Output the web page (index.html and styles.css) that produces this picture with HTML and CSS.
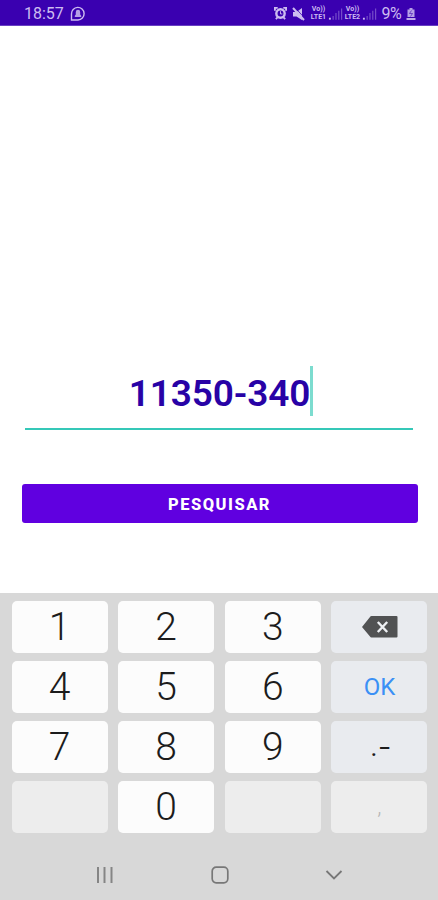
FILE: index.html
```html
<!DOCTYPE html>
<html lang="pt-BR">
<head>
<meta charset="utf-8">
<meta name="viewport" content="width=device-width, initial-scale=1">
<title>Pesquisar CEP</title>
<link rel="stylesheet" href="styles.css">
</head>
<body>
<div class="phone">
  <header class="status">
    <span class="clock">18:57</span>
    <svg class="chat" width="16" height="16" viewBox="0 0 16 16"><path d="M1.500 14V8A6.300 6.300 0 1 1 8 14z" fill="none" stroke="currentColor" stroke-width="1.400"/><path d="M4.800 11V9.800L5.800 8.500V6a2.200 2.200 0 0 1 4.400 0V8.500L11.200 9.800V11z" fill="currentColor" opacity=".85"/></svg>
    <div class="tray">
      <svg width="13" height="13" viewBox="0 0 14 14"><path d="M1 4V1h3M10 1h3v3M2 13l2-2M12 13l-2-2" fill="none" stroke="currentColor" stroke-width="2"/><circle cx="7" cy="7" r="4.500" fill="none" stroke="currentColor" stroke-width="2.600"/><path d="M7 4.500V7.500H9" fill="none" stroke="currentColor"/></svg>
      <svg class="mute" width="13" height="14" viewBox="0 0 13 14"><path d="M1 5h3.500L10 1v12L4.500 9.500H1z" fill="currentColor"/><path d="M2.500 0l11 12" stroke="#3a00b0" stroke-width=".8"/><path d="M1 1l11 12" stroke="currentColor" stroke-width="2"/></svg>
      <span class="lte"><span>Vo))</span><span>LTE1</span></span>
      <svg class="signal" width="15" height="14" viewBox="0 0 16 14"><path d="M1 11h2v2H1z" fill="currentColor"/><path d="M5.500 9v4M8.500 6v7M11.500 3.500V13M14.500 1V13" stroke="currentColor" stroke-width="1.300" opacity=".4"/></svg>
      <span class="lte"><span>Vo))</span><span>LTE2</span></span>
      <svg class="signal" width="15" height="14" viewBox="0 0 16 14"><path d="M1 11h2v2H1z" fill="currentColor"/><path d="M5.500 9v4M8.500 6v7M11.500 3.500V13M14.500 1V13" stroke="currentColor" stroke-width="1.300" opacity=".4"/></svg>
      <span class="battery">9%</span>
      <svg class="cell" width="10" height="14" viewBox="0 0 9 14"><path d="M3 1h3v1.500h2V10H1V2.500h2z" fill="currentColor" opacity=".85"/><path d="M5 3.500L3 6.500h3l-2 3" fill="none" stroke="#3a00b0" stroke-width=".6"/><path d="M0 12h9" stroke="currentColor" stroke-width="1.800"/></svg>
    </div>
  </header>
  <main class="content">
    <div class="field"><span class="value">11350-340</span><i class="caret"></i></div>
    <button class="search">PESQUISAR</button>
  </main>
  <section class="keyboard">
    <div class="keys">
      <div class="key">1</div><div class="key">2</div><div class="key">3</div>
      <div class="key action"><svg class="erase" width="36" height="22" viewBox="0 0 36 22"><path d="M9.500 0H34.500Q35.500 0 35.500 1V20.500Q35.500 21.500 34.500 21.500H9.500Q8.500 21.500 8 20.500L0 11 8 1Q8.500 0 9.500 0z" fill="#515253"/><path d="M15.800 6l9.400 10M25.200 6l-9.400 10" stroke="#eef0f3" stroke-width="2.400"/></svg></div>
      <div class="key">4</div><div class="key">5</div><div class="key">6</div><div class="key action ok">OK</div>
      <div class="key">7</div><div class="key">8</div><div class="key">9</div>
      <div class="key action symbols"><span class="dot">.</span><span class="dash">-</span></div>
      <div class="key off"></div><div class="key">0</div><div class="key off"></div><div class="key off comma">,</div>
    </div>
    <nav class="nav">
      <svg width="18" height="18" viewBox="0 0 18 18"><path d="M2 1v16M8.500 1v16M15.500 1v16" stroke="#858585" stroke-width="2"/></svg>
      <svg width="18" height="18" viewBox="0 0 18 18"><rect x="1.200" y="1.200" width="15.600" height="15.600" rx="4" fill="none" stroke="#777" stroke-width="1.700"/></svg>
      <svg width="18" height="18" viewBox="0 0 18 18"><path d="M1.500 5L9 12.500 16.500 5" fill="none" stroke="#777" stroke-width="1.800"/></svg>
    </nav>
  </section>
</div>
</body>
</html>
```
FILE: styles.css
```css
* { box-sizing: border-box; }
body { margin: 0; background: #fff; font-family: Roboto, sans-serif; }
.phone { width: 438px; height: 900px; display: flex; flex-direction: column; overflow: hidden; }
.status {
  height: 26px;
  flex: none;
  display: flex;
  align-items: center;
  padding: 2px 22px 0 24px;
  background: #3a00b0;
  border-bottom: 1px solid #6840c2;
  color: #cdbcf0;
}
.clock { font-size: 16px; line-height: 20px; }
.chat { margin-left: 6px; }
.tray { margin-left: auto; display: flex; align-items: center; }
.mute { margin: 0 4px 0 5px; }
.lte {
  display: flex;
  flex-direction: column;
  gap: 1px;
  width: 18px;
  font-size: 7px;
  line-height: 7px;
  font-weight: 700;
  text-align: center;
}
.signal { margin-left: 1px; }
.battery { margin-left: 4px; font-size: 16px; line-height: 20px; letter-spacing: -0.6px; }
.cell { margin-left: 5px; }
.content { flex: 1; padding: 338px 21px 0; }
.field {
  height: 66px;
  margin: 0 4px;
  display: flex;
  justify-content: center;
  border-bottom: 2px solid #35c8b8;
}
.value {
  font-size: 37px;
  line-height: 59px;
  font-weight: 600;
  letter-spacing: -0.15px;
  color: #2802a6;
  margin-left: 4px;
}
.caret { width: 3px; height: 50px; margin-top: 2px; background: #7cdccf; }
.search {
  display: block;
  width: 396px;
  height: 39px;
  margin: 54px 0 0 0.5px;
  padding: 2px 0 0;
  border: 0;
  border-radius: 3px;
  background: #6000e0;
  color: #fff;
  font: 800 16.5px/37px Roboto, sans-serif;
  letter-spacing: 1.5px;
}
.keyboard { height: 307px; flex: none; padding: 7.5px 10.500px 0 11.500px; background: #d8d8d8; }
.keys {
  display: grid;
  grid-template-columns: repeat(4, 96px);
  grid-auto-rows: 52px;
  gap: 8px 10.670px;
}
.key {
  display: flex;
  align-items: center;
  justify-content: center;
  border-radius: 5px;
  background: #fcfcfc;
  color: #1c1c1c;
  font-size: 39px;
  font-weight: 300;
  line-height: 52px;
}
.action { background: #e9ebef; }
.erase { margin-left: 1px; }
.ok { color: #3b90f5; font-size: 24px; font-weight: 400; }
.symbols { font-size: 26px; font-weight: 400; }
.dot { margin-right: 2px; }
.dash { transform: scaleX(1.5); margin-left: 2px; }
.off { background: #ededed; }
.comma { color: #b5b5b5; font-size: 22px; }
.nav { display: flex; justify-content: space-between; margin: 33.5px 84.500px 0 84.500px; }
```
